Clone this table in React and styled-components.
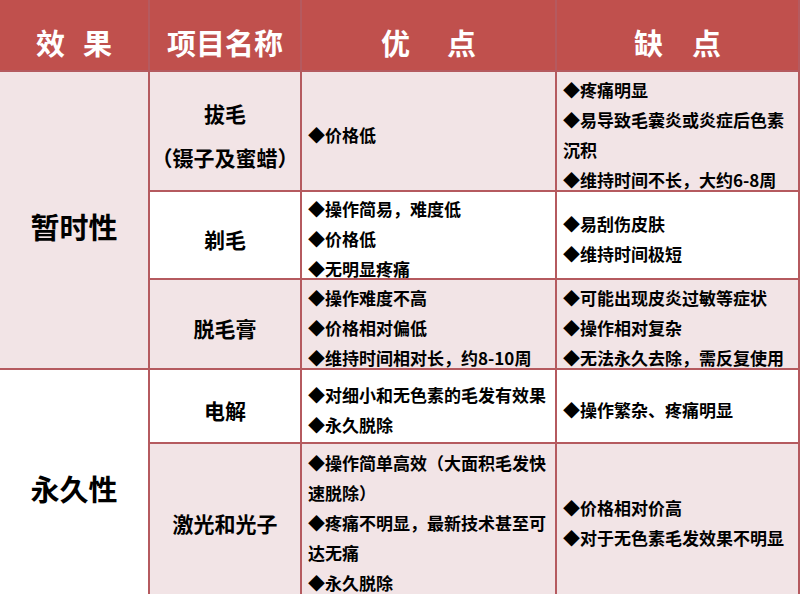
import styled, { createGlobalStyle } from "styled-components";

const GlobalStyle = createGlobalStyle`
    html, body {
        margin: 0;
        padding: 0;
        background: #fff;
    }
    body {
        font-family: "Noto Sans CJK SC", "Noto Sans", sans-serif;
        font-weight: 700;
        color: #000;
    }
`;

const Table = styled.div`
    display: grid;
    width: 800px;
    height: 594px;
    box-sizing: border-box;
    grid-template-columns: 148px 150px 253px 241px;
    grid-template-rows: 70px 118px 86px 88px 72px 150px;
    gap: 2px;
    padding: 0 2px 0 0;
    background: #b55a5f;
    overflow: hidden;
`;

const HeadCell = styled.div`
    display: flex;
    justify-content: center;
    align-items: center;
    gap: ${p => p.$gap}px;
    padding-top: 14px;
    box-sizing: border-box;
    background: #c0504d;
    color: #fff;
    font-size: 29px;
    line-height: 1;
`;

const Cell = styled.div`
    display: flex;
    flex-direction: column;
    justify-content: center;
    align-items: ${p => (p.$center ? "center" : "flex-start")};
    text-align: ${p => (p.$center ? "center" : "left")};
    box-sizing: border-box;
    padding: 8px 6px 0 6px;
    background: ${p => (p.$shaded ? "#f2e4e6" : "#fff")};
    grid-row: ${p => p.$row || "auto"};
    min-height: 0;
`;

const Category = styled.div`
    font-size: 29px;
    line-height: 40px;
    padding-top: 4px;
`;

const ItemName = styled.div`
    font-size: 21px;
    line-height: 44px;
    white-space: nowrap;
`;

const Line = styled.div`
    font-size: 17px;
    line-height: 30px;
    white-space: nowrap;
`;

const headers = [
    { chars: ["效", "果"], gap: 18 },
    { chars: ["项目名称"], gap: 0 },
    { chars: ["优", "点"], gap: 37 },
    { chars: ["缺", "点"], gap: 29 },
];

const rows = [
    {
        name: ["拔毛", "（镊子及蜜蜡）"],
        shaded: true,
        pros: ["◆价格低"],
        cons: ["◆疼痛明显", "◆易导致毛囊炎或炎症后色素", "沉积", "◆维持时间不长，大约6-8周"],
    },
    {
        name: ["剃毛"],
        shaded: false,
        pros: ["◆操作简易，难度低", "◆价格低", "◆无明显疼痛"],
        cons: ["◆易刮伤皮肤", "◆维持时间极短"],
    },
    {
        name: ["脱毛膏"],
        shaded: true,
        pros: ["◆操作难度不高", "◆价格相对偏低", "◆维持时间相对长，约8-10周"],
        cons: ["◆可能出现皮炎过敏等症状", "◆操作相对复杂", "◆无法永久去除，需反复使用"],
    },
    {
        name: ["电解"],
        shaded: false,
        pros: ["◆对细小和无色素的毛发有效果", "◆永久脱除"],
        cons: ["◆操作繁杂、疼痛明显"],
    },
    {
        name: ["激光和光子"],
        shaded: true,
        pros: ["◆操作简单高效（大面积毛发快", "速脱除）", "◆疼痛不明显，最新技术甚至可", "达无痛", "◆永久脱除"],
        cons: ["◆价格相对价高", "◆对于无色素毛发效果不明显"],
    },
];

function Lines({ items }) {
    return items.map((t, i) => <Line key={i}>{t}</Line>);
}

export default function App() {
    return (
        <>
            <GlobalStyle />
            <Table>
                {headers.map((h, i) => (
                    <HeadCell key={i} $gap={h.gap}>
                        {h.chars.map(c => <span key={c}>{c}</span>)}
                    </HeadCell>
                ))}

                {rows.map((r, i) => (
                    <Row key={i} index={i} row={r} />
                ))}
            </Table>
        </>
    );
}

function Row({ index, row }) {
    return (
        <>
            {index === 0 && (
                <Cell $center $shaded $row="2 / span 3">
                    <Category>暂时性</Category>
                </Cell>
            )}
            {index === 3 && (
                <Cell $center $row="5 / span 2">
                    <Category>永久性</Category>
                </Cell>
            )}
            <Cell $center $shaded={row.shaded}>
                {row.name.map(n => <ItemName key={n}>{n}</ItemName>)}
            </Cell>
            <Cell $shaded={row.shaded}>
                <Lines items={row.pros} />
            </Cell>
            <Cell $shaded={row.shaded}>
                <Lines items={row.cons} />
            </Cell>
        </>
    );
}
